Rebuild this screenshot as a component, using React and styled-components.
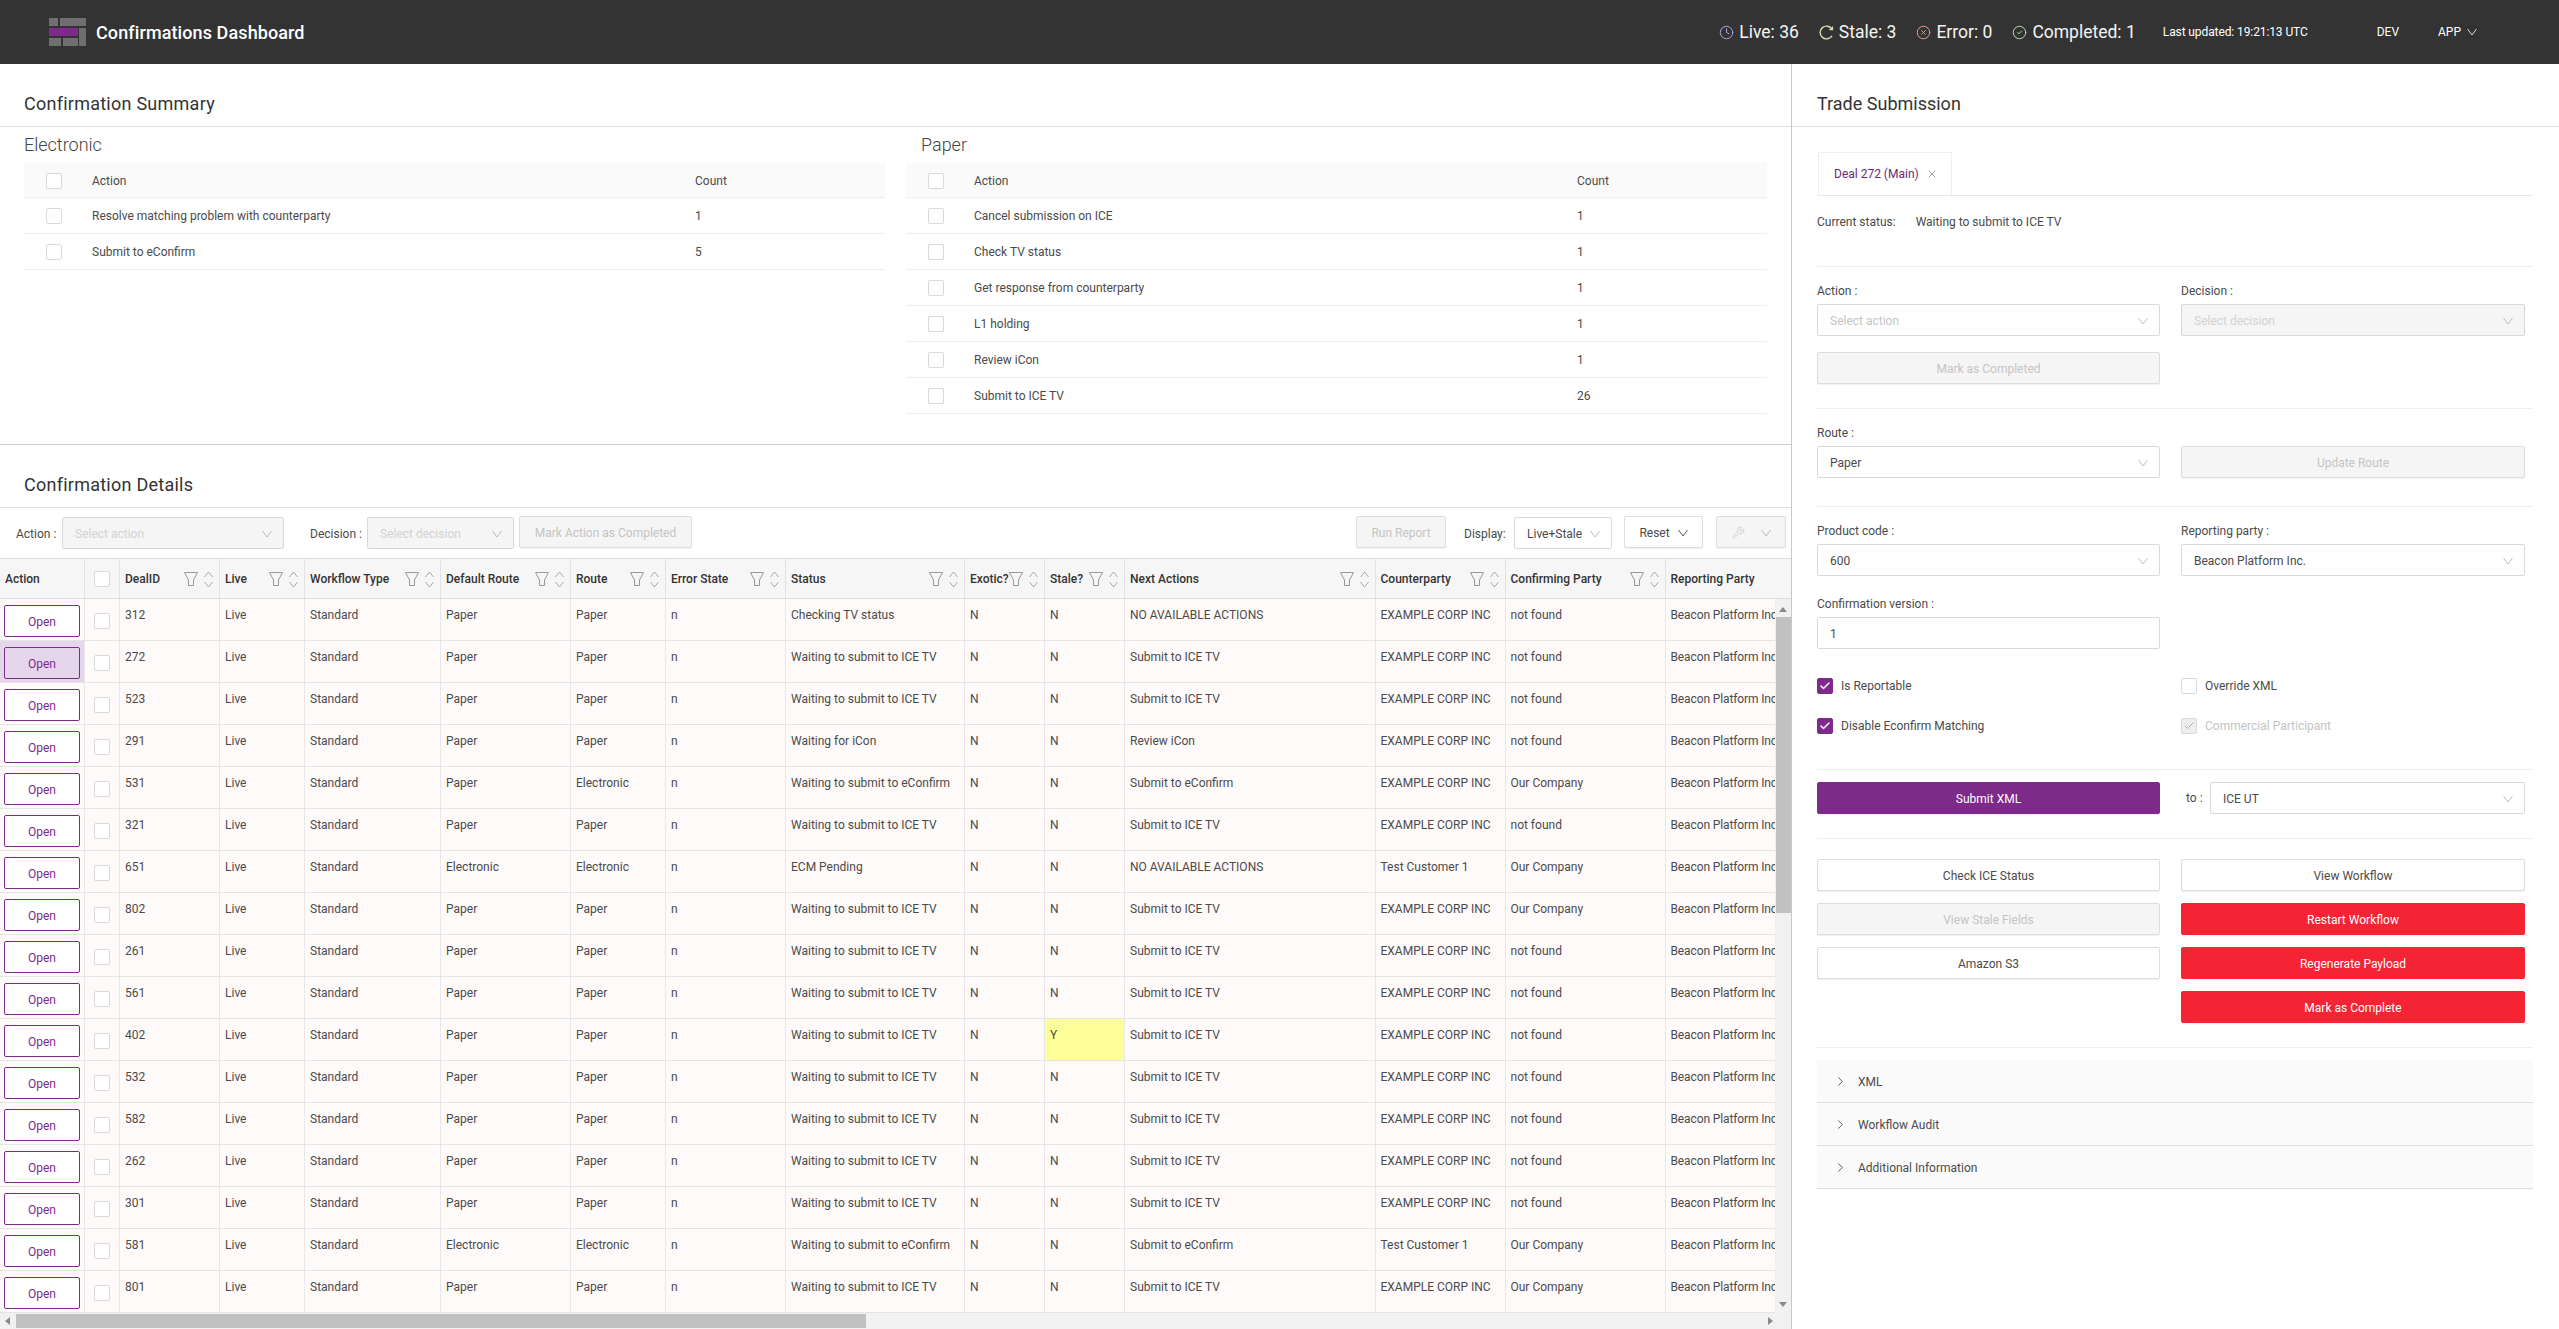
import React from 'react';
import styled, { createGlobalStyle } from 'styled-components';
import { Clock, CircleX, CircleCheck, ChevronRight, Wrench, X, Check } from 'lucide-react';

const FONT = `Roboto, "Open Sans", "Liberation Sans", sans-serif`;
const PURPLE = '#7d2a8a';
const COLS = '85px 35px 100px 85px 136px 130px 95px 120px 179px 80px 80px 250.5px 130px 160px 160px';

const GlobalStyle = createGlobalStyle`
  html, body { margin: 0; padding: 0; height: 100%; background: #fff; overflow: hidden; }
  body { font-family: ${FONT}; font-size: 12px; color: #4a4a4a; }
  * { box-sizing: border-box; }
`;

// Header
const Page = styled.div`
  display: flex;
  flex-direction: column;
  height: 100vh;
  overflow: hidden;
`;

const TopBar = styled.header`
  display: flex;
  align-items: center;
  flex: none;
  height: 64px;
  padding: 0 82px 0 49px;
  background: #333;
  color: #fff;
`;

const AppTitle = styled.div`
  margin-left: 10px;
  font-size: 18px;
  font-weight: 500;
  letter-spacing: 0.1px;
`;

const StatusList = styled.div`
  display: flex;
  align-items: center;
  gap: 20px;
  margin-left: auto;
`;

const StatusItem = styled.div`
  display: flex;
  align-items: center;
  gap: 5px;
  font-size: 17.5px;
  color: #f4f4f4;
  svg { color: ${props => props.tint}; }
`;

const Updated = styled.div`
  margin-left: 27px;
  font-size: 12px;
  letter-spacing: -0.1px;
`;

const EnvLabel = styled.div`
  display: flex;
  align-items: center;
  gap: 6px;
  margin-left: ${props => props.gap}px;
  font-size: 12px;
`;

// Panels
const Main = styled.div`
  display: flex;
  flex: 1;
  min-height: 0;
`;

const LeftColumn = styled.div`
  display: flex;
  flex-direction: column;
  flex: none;
  width: 1792px;
  border-right: 1px solid #c8c8c8;
`;

const RightColumn = styled.aside`
  flex: 1;
  min-width: 0;
`;

const SectionHead = styled.div`
  display: flex;
  align-items: flex-end;
  height: 63px;
  padding: 0 0 10px ${props => props.left || 24}px;
  border-bottom: 1px solid #ddd;
`;

const SectionTitle = styled.h2`
  margin: 0;
  font-size: 18px;
  line-height: 24px;
  font-weight: 400;
  letter-spacing: ${props => (props.tight ? 0 : 0.25)}px;
  color: #333;
`;

const SummarySection = styled.section`
  flex: none;
  height: 381px;
  border-bottom: 1px solid #ccc;
`;

const SummaryGrid = styled.div`
  display: flex;
  gap: 21px;
  padding: 6px 24px 0;
`;

const SummaryCard = styled.div`
  flex: 1;
`;

const CardTitle = styled.h3`
  margin: 0 0 6px;
  padding-left: ${props => props.indent || 0}px;
  font-size: 18px;
  line-height: 24px;
  font-weight: 300;
  color: #444;
`;

const SummaryRow = styled.div`
  display: grid;
  grid-template-columns: 46px 603px 1fr;
  align-items: center;
  height: ${props => (props.head ? 35 : 36)}px;
  border-bottom: 1px solid #eee;
  background: ${props => (props.head ? '#fafafa' : '#fff')};
  padding: 1px 0 0 22px;
`;

const CheckBox = styled.span`
  display: inline-flex;
  align-items: center;
  justify-content: center;
  flex: none;
  width: 16px;
  height: 16px;
  border: 1px solid ${props => (props.on ? PURPLE : '#d9d9d9')};
  border-radius: 2px;
  background: ${props => (props.on ? PURPLE : '#fff')};
  color: #fff;
  ${props => props.off && 'background: #eee; border-color: #d9d9d9; color: #aaa;'}
`;

// Details table
const DetailsSection = styled.section`
  display: flex;
  flex-direction: column;
  flex: 1;
  min-height: 0;
`;

const Toolbar = styled.div`
  display: flex;
  align-items: flex-start;
  flex: none;
  height: 50px;
  padding: 8px 5px 0 16px;
`;

const ToolLabel = styled.span`
  margin: 2px 0 0 ${props => props.gap || 0}px;
  width: ${props => props.w}px;
  line-height: 32px;
  white-space: nowrap;
`;

const Select = styled.div`
  display: flex;
  align-items: center;
  justify-content: space-between;
  flex: none;
  width: ${props => (props.w ? `${props.w}px` : '100%')};
  height: 32px;
  margin-top: ${props => props.top || 0}px;
  padding: 1px 11px 0 12px;
  border: 1px solid #d9d9d9;
  border-radius: 2px;
  background: ${props => (props.disabled ? '#f5f5f5' : '#fff')};
  color: ${props => (props.disabled ? '#d2d2d2' : props.muted ? '#c4c4c4' : '#4a4a4a')};
`;

const Button = styled.div`
  display: flex;
  align-items: center;
  justify-content: center;
  flex: none;
  gap: ${props => props.spread || 8}px;
  width: ${props => (props.w ? `${props.w}px` : '100%')};
  height: 32px;
  margin-left: ${props => props.gap || 0}px;
  padding-top: 1px;
  border: 1px solid ${props => props.fill || '#ddd'};
  border-radius: 2px;
  background: ${props => props.fill || (props.disabled ? '#f5f5f5' : '#fff')};
  color: ${props => (props.fill ? '#fff' : props.disabled ? '#c4c4c4' : '#4a4a4a')};
  box-shadow: 0 1px 1px rgba(0, 0, 0, 0.06);
`;

const EndButton = styled(Button)`
  align-self: end;
`;

const Spacer = styled.div`
  flex: 1;
`;

const Table = styled.div`
  display: flex;
  flex-direction: column;
  flex: 1;
  min-height: 0;
`;

const HeadRow = styled.div`
  display: grid;
  grid-template-columns: ${COLS};
  flex: none;
  height: 41px;
  overflow: hidden;
  border-top: 1px solid #ddd;
  border-bottom: 1px solid #ddd;
  background: #f6f6f6;
`;

const HeadCell = styled.div`
  display: flex;
  align-items: center;
  padding: 1px 6px 0 ${props => props.pad ?? 5}px;
  border-right: 1px solid #e2e2e2;
  font-weight: 500;
  color: #333;
  white-space: nowrap;
  overflow: hidden;
`;

const HeadIcons = styled.span`
  display: flex;
  align-items: center;
  gap: 6px;
  margin-left: auto;
  color: #aaa;
`;

const BodyWrap = styled.div`
  display: flex;
  flex: 1;
  min-height: 0;
`;

const Rows = styled.div`
  flex: 1;
  min-width: 0;
  overflow: hidden;
`;

const Row = styled.div`
  display: grid;
  grid-template-columns: ${COLS};
  height: 42px;
  border-bottom: 1px solid #e4e4e4;
  background: #fffafa;
`;

const Cell = styled.div`
  padding: 7px 5px 0;
  border-right: 1px solid #e8e8e8;
  line-height: 18px;
  white-space: nowrap;
  overflow: hidden;
  letter-spacing: ${props => (props.snug ? -0.12 : 0)}px;
  background: ${props => (props.stale ? '#ffff99' : 'transparent')};
`;

const ActionCell = styled.div`
  padding: 6px 0 0 4px;
  border-right: 1px solid #e8e8e8;
  background: ${props => (props.active ? '#e6d6eb' : 'transparent')};
`;

const CheckCell = styled.div`
  padding: 14px 0 0 9px;
  border-right: 1px solid #e8e8e8;
`;

const OpenButton = styled.div`
  display: flex;
  align-items: center;
  justify-content: center;
  width: 76px;
  height: 32px;
  padding-top: 1px;
  border: 1px solid ${PURPLE};
  border-radius: 2px;
  background: ${props => (props.active ? '#e6d6eb' : '#fff')};
  color: ${PURPLE};
`;

const VScroll = styled.div`
  display: flex;
  flex-direction: column;
  align-items: center;
  flex: none;
  width: 16px;
  background: #f1f1f1;
`;

const Thumb = styled.div`
  flex: none;
  width: ${props => (props.flat ? 'auto' : '15px')};
  height: ${props => (props.flat ? '14px' : '296px')};
  background: #c1c1c1;
`;

const HScroll = styled.div`
  display: flex;
  align-items: center;
  flex: none;
  height: 16px;
  background: #f1f1f1;
`;

const HThumb = styled(Thumb)`
  width: 850px;
  margin: 0 0 0 6px;
`;

const Arrow = styled.span`
  flex: none;
  width: 0;
  height: 0;
  margin: ${props => props.m || '0'};
  border: 4px solid transparent;
  ${props => `border-${props.side}-color: #8a8a8a;`}
  ${props => `border-${props.side}-width: 5px;`}
`;

// Right panel
const RightBody = styled.div`
  padding: 25px 26px 0 25px;
`;

const TabBar = styled.div`
  display: flex;
  padding-left: 1px;
  border-bottom: 1px solid #e8e8e8;
`;

const Tab = styled.div`
  display: flex;
  align-items: center;
  gap: 7px;
  width: 134px;
  height: 43px;
  padding-left: 15px;
  border: 1px solid #eee;
  border-bottom: 0;
  color: #6b2a78;
  svg { color: #666; }
`;

const StatusLine = styled.div`
  display: flex;
  gap: 20px;
  margin-top: 17px;
  line-height: 18px;
`;

const Divider = styled.div`
  height: 1px;
  margin-top: ${props => props.top}px;
  background: #eee;
`;

const FieldGrid = styled.div`
  display: grid;
  grid-template-columns: 343px 344px;
  column-gap: 21px;
  row-gap: ${props => props.rowGap || 0}px;
  margin-top: ${props => props.top || 0}px;
`;

const FieldLabel = styled.div`
  height: 18px;
  margin-bottom: 4px;
  line-height: 18px;
`;

const Input = styled.div`
  display: flex;
  align-items: center;
  height: 32px;
  padding: 1px 0 0 12px;
  border: 1px solid #d9d9d9;
  border-radius: 2px;
`;

const CheckRow = styled.div`
  display: flex;
  align-items: center;
  gap: 8px;
  color: ${props => (props.dim ? '#c4c4c4' : '#4a4a4a')};
`;

const ToField = styled.div`
  display: flex;
  align-items: center;
  padding-left: 5px;
  gap: 8px;
`;

const ToLabel = styled.span`
  flex: none;
  width: 16px;
  white-space: nowrap;
`;

const ButtonColumn = styled.div`
  display: flex;
  flex-direction: column;
  gap: 12px;
`;

const Accordion = styled.div`
  margin-top: 12px;
`;

const AccordionItem = styled.div`
  display: flex;
  align-items: center;
  gap: 10px;
  height: 43px;
  padding: 1px 0 0 16px;
  border-bottom: 1px solid #ddd;
  background: #fafafa;
  svg { color: #444; }
`;

// Little drawings
const Caret = ({ color = '#bbb' }) => (
  <svg width="10" height="8" viewBox="0 0 10 8" fill="none" stroke={color} strokeWidth="1">
    <path d="M0.5 1 5 7l4.5-6" />
  </svg>
);

const Funnel = () => (
  <svg width="14" height="14" viewBox="0 0 14 14" fill="none" stroke="#999" strokeWidth="1">
    <path d="M0.5 0.5h13L9.5 8v5.5h-5V8z" />
  </svg>
);

const Sort = () => (
  <svg width="9" height="17" viewBox="0 0 9 17" fill="none" stroke="#aaa" strokeWidth="1">
    <path d="M0.5 6 4.5 1l4 5M0.5 11l4 5 4-5" />
  </svg>
);

const Reload = ({ size }) => (
  <svg width={size} height={size} viewBox="0 0 15 15" fill="none" stroke="currentColor" strokeWidth="1.4">
    <path d="M13 4.2A6.4 6.4 0 1 0 13 10.8" />
    <path d="M13.4 1.6v3h-3" />
  </svg>
);

const Logo = () => (
  <svg width="37" height="28" viewBox="0 0 37 28">
    <g fill="#6f6f6f">
      <rect x="0" y="0" width="9" height="8" />
      <rect x="11" y="0" width="26" height="8" />
      <rect x="30" y="10" width="7" height="18" />
      <rect x="0" y="20" width="12" height="8" />
      <rect x="14" y="20" width="15" height="8" />
    </g>
    <rect x="0" y="10" width="29" height="8" fill="#7d2a8a" />
  </svg>
);

const HeadLabel = ({ children, filter = true, pad }) => (
  <HeadCell pad={pad}>
    {children}
    {filter && (
      <HeadIcons>
        <Funnel />
        <Sort />
      </HeadIcons>
    )}
  </HeadCell>
);

const SelectBox = ({ value, muted, disabled, w, top }) => (
  <Select w={w} top={top} muted={muted} disabled={disabled}>
    {value}
    <Caret />
  </Select>
);

const electronicRows = [
  ['Resolve matching problem with counterparty', 1],
  ['Submit to eConfirm', 5],
];

const paperRows = [
  ['Cancel submission on ICE', 1],
  ['Check TV status', 1],
  ['Get response from counterparty', 1],
  ['L1 holding', 1],
  ['Review iCon', 1],
  ['Submit to ICE TV', 26],
];

const SummaryTable = ({ title, rows, indent }) => (
  <SummaryCard>
    <CardTitle indent={indent}>{title}</CardTitle>
    <SummaryRow head>
      <CheckBox />
      <span>Action</span>
      <span>Count</span>
    </SummaryRow>
    {rows.map(([action, count]) => (
      <SummaryRow key={action}>
        <CheckBox />
        <span>{action}</span>
        <span>{count}</span>
      </SummaryRow>
    ))}
  </SummaryCard>
);

const EXAMPLE = 'EXAMPLE CORP INC';
const TV = 'Waiting to submit to ICE TV';
const EC = 'Waiting to submit to eConfirm';
const NEXT_TV = 'Submit to ICE TV';
const NEXT_EC = 'Submit to eConfirm';
const NONE = 'NO AVAILABLE ACTIONS';

// id, default route, route, status, stale, next action, counterparty, confirming party
const deals = [
  [312, 'Paper', 'Paper', 'Checking TV status', 'N', NONE, EXAMPLE, 'not found'],
  [272, 'Paper', 'Paper', TV, 'N', NEXT_TV, EXAMPLE, 'not found'],
  [523, 'Paper', 'Paper', TV, 'N', NEXT_TV, EXAMPLE, 'not found'],
  [291, 'Paper', 'Paper', 'Waiting for iCon', 'N', 'Review iCon', EXAMPLE, 'not found'],
  [531, 'Paper', 'Electronic', EC, 'N', NEXT_EC, EXAMPLE, 'Our Company'],
  [321, 'Paper', 'Paper', TV, 'N', NEXT_TV, EXAMPLE, 'not found'],
  [651, 'Electronic', 'Electronic', 'ECM Pending', 'N', NONE, 'Test Customer 1', 'Our Company'],
  [802, 'Paper', 'Paper', TV, 'N', NEXT_TV, EXAMPLE, 'Our Company'],
  [261, 'Paper', 'Paper', TV, 'N', NEXT_TV, EXAMPLE, 'not found'],
  [561, 'Paper', 'Paper', TV, 'N', NEXT_TV, EXAMPLE, 'not found'],
  [402, 'Paper', 'Paper', TV, 'Y', NEXT_TV, EXAMPLE, 'not found'],
  [532, 'Paper', 'Paper', TV, 'N', NEXT_TV, EXAMPLE, 'not found'],
  [582, 'Paper', 'Paper', TV, 'N', NEXT_TV, EXAMPLE, 'not found'],
  [262, 'Paper', 'Paper', TV, 'N', NEXT_TV, EXAMPLE, 'not found'],
  [301, 'Paper', 'Paper', TV, 'N', NEXT_TV, EXAMPLE, 'not found'],
  [581, 'Electronic', 'Electronic', EC, 'N', NEXT_EC, 'Test Customer 1', 'Our Company'],
  [801, 'Paper', 'Paper', TV, 'N', NEXT_TV, EXAMPLE, 'Our Company'],
];

const DealRow = ({ deal }) => {
  const [id, defaultRoute, route, status, stale, next, counterparty, confirming] = deal;
  const active = id === 272;
  return (
    <Row>
      <ActionCell active={active}>
        <OpenButton active={active}>Open</OpenButton>
      </ActionCell>
      <CheckCell>
        <CheckBox />
      </CheckCell>
      <Cell>{id}</Cell>
      <Cell>Live</Cell>
      <Cell>Standard</Cell>
      <Cell>{defaultRoute}</Cell>
      <Cell>{route}</Cell>
      <Cell>n</Cell>
      <Cell>{status}</Cell>
      <Cell>N</Cell>
      <Cell stale={stale === 'Y'}>{stale}</Cell>
      <Cell>{next}</Cell>
      <Cell>{counterparty}</Cell>
      <Cell>{confirming}</Cell>
      <Cell snug>Beacon Platform Inc.</Cell>
    </Row>
  );
};

const App = () => (
  <Page>
    <GlobalStyle />
    <TopBar>
      <Logo />
      <AppTitle>Confirmations Dashboard</AppTitle>
      <StatusList>
        <StatusItem tint="#a8a8dc"><Clock size={15} strokeWidth={1.6} />Live: 36</StatusItem>
        <StatusItem tint="#dcdcb0"><Reload size={15} />Stale: 3</StatusItem>
        <StatusItem tint="#e29a9a"><CircleX size={15} strokeWidth={1.6} />Error: 0</StatusItem>
        <StatusItem tint="#b6dcaa"><CircleCheck size={15} strokeWidth={1.6} />Completed: 1</StatusItem>
      </StatusList>
      <Updated>Last updated: 19:21:13 UTC</Updated>
      <EnvLabel gap={69}>DEV</EnvLabel>
      <EnvLabel gap={39}>APP <Caret color="#ddd" /></EnvLabel>
    </TopBar>
    <Main>
      <LeftColumn>
        <SummarySection>
          <SectionHead>
            <SectionTitle>Confirmation Summary</SectionTitle>
          </SectionHead>
          <SummaryGrid>
            <SummaryTable title="Electronic" rows={electronicRows} />
            <SummaryTable title="Paper" rows={paperRows} indent={15} />
          </SummaryGrid>
        </SummarySection>
        <DetailsSection>
          <SectionHead>
            <SectionTitle>Confirmation Details</SectionTitle>
          </SectionHead>
          <Toolbar>
            <ToolLabel w={46}>Action :</ToolLabel>
            <SelectBox w={222} top={1} value="Select action" disabled />
            <ToolLabel gap={26} w={57}>Decision :</ToolLabel>
            <SelectBox w={147} top={1} value="Select decision" disabled />
            <Button w={173} gap={5} disabled>Mark Action as Completed</Button>
            <Spacer />
            <Button w={90} disabled>Run Report</Button>
            <ToolLabel gap={18} w={50}>Display:</ToolLabel>
            <SelectBox w={98} top={1} value="Live+Stale" />
            <Button w={79} gap={12}>Reset <Caret color="#555" /></Button>
            <Button w={70} gap={13} spread={16} disabled><Wrench size={13} strokeWidth={1.2} color="#bbb" /><Caret /></Button>
          </Toolbar>
          <Table>
            <HeadRow>
              <HeadLabel filter={false}>Action</HeadLabel>
              <HeadCell pad={9}><CheckBox /></HeadCell>
              <HeadLabel>DealID</HeadLabel>
              <HeadLabel>Live</HeadLabel>
              <HeadLabel>Workflow Type</HeadLabel>
              <HeadLabel>Default Route</HeadLabel>
              <HeadLabel>Route</HeadLabel>
              <HeadLabel>Error State</HeadLabel>
              <HeadLabel>Status</HeadLabel>
              <HeadLabel>Exotic?</HeadLabel>
              <HeadLabel>Stale?</HeadLabel>
              <HeadLabel>Next Actions</HeadLabel>
              <HeadLabel>Counterparty</HeadLabel>
              <HeadLabel>Confirming Party</HeadLabel>
              <HeadLabel filter={false}>Reporting Party</HeadLabel>
            </HeadRow>
            <BodyWrap>
              <Rows>
                {deals.map(deal => <DealRow key={deal[0]} deal={deal} />)}
              </Rows>
              <VScroll>
                <Arrow side="bottom" m="4px 0 5px" />
                <Thumb />
                <Spacer />
                <Arrow side="top" m="0 0 2px" />
              </VScroll>
            </BodyWrap>
            <HScroll>
              <Arrow side="right" m="0 0 0 1px" />
              <HThumb flat />
              <Spacer />
              <Arrow side="left" m="0 14px 0 0" />
            </HScroll>
          </Table>
        </DetailsSection>
      </LeftColumn>
      <RightColumn>
        <SectionHead left={25}>
          <SectionTitle tight>Trade Submission</SectionTitle>
        </SectionHead>
        <RightBody>
          <TabBar>
            <Tab>Deal 272 (Main) <X size={12} strokeWidth={1.3} /></Tab>
          </TabBar>
          <StatusLine>
            <span>Current status:</span>
            <span>Waiting to submit to ICE TV</span>
          </StatusLine>
          <Divider top={35} />

          <FieldGrid top={15}>
            <div>
              <FieldLabel>Action :</FieldLabel>
              <SelectBox value="Select action" muted />
            </div>
            <div>
              <FieldLabel>Decision :</FieldLabel>
              <SelectBox value="Select decision" disabled />
            </div>
          </FieldGrid>
          <FieldGrid top={16}>
            <Button disabled>Mark as Completed</Button>
          </FieldGrid>
          <Divider top={24} />

          <FieldGrid top={15}>
            <div>
              <FieldLabel>Route :</FieldLabel>
              <SelectBox value="Paper" />
            </div>
            <EndButton disabled>Update Route</EndButton>
          </FieldGrid>
          <Divider top={28} />

          <FieldGrid top={15}>
            <div>
              <FieldLabel>Product code :</FieldLabel>
              <SelectBox value="600" />
            </div>
            <div>
              <FieldLabel>Reporting party :</FieldLabel>
              <SelectBox value="Beacon Platform Inc." />
            </div>
          </FieldGrid>
          <FieldGrid top={19}>
            <div>
              <FieldLabel>Confirmation version :</FieldLabel>
              <Input>1</Input>
            </div>
          </FieldGrid>

          <FieldGrid top={29} rowGap={24}>
            <CheckRow><CheckBox on><Check size={12} strokeWidth={3} /></CheckBox>Is Reportable</CheckRow>
            <CheckRow><CheckBox />Override XML</CheckRow>
            <CheckRow><CheckBox on><Check size={12} strokeWidth={3} /></CheckBox>Disable Econfirm Matching</CheckRow>
            <CheckRow dim><CheckBox off><Check size={12} strokeWidth={2} /></CheckBox>Commercial Participant</CheckRow>
          </FieldGrid>
          <Divider top={35} />

          <FieldGrid top={12}>
            <Button fill={PURPLE}>Submit XML</Button>
            <ToField>
              <ToLabel>to :</ToLabel>
              <SelectBox w={315} value="ICE UT" />
            </ToField>
          </FieldGrid>
          <Divider top={24} />

          <FieldGrid top={20}>
            <ButtonColumn>
              <Button>Check ICE Status</Button>
              <Button disabled>View Stale Fields</Button>
              <Button>Amazon S3</Button>
            </ButtonColumn>
            <ButtonColumn>
              <Button>View Workflow</Button>
              <Button fill="#f42434">Restart Workflow</Button>
              <Button fill="#f42434">Regenerate Payload</Button>
              <Button fill="#f42434">Mark as Complete</Button>
            </ButtonColumn>
          </FieldGrid>
          <Divider top={24} />

          <Accordion>
            <AccordionItem><ChevronRight size={15} strokeWidth={1.4} />XML</AccordionItem>
            <AccordionItem><ChevronRight size={15} strokeWidth={1.4} />Workflow Audit</AccordionItem>
            <AccordionItem><ChevronRight size={15} strokeWidth={1.4} />Additional Information</AccordionItem>
          </Accordion>
        </RightBody>
      </RightColumn>
    </Main>
  </Page>
);

export default App;
